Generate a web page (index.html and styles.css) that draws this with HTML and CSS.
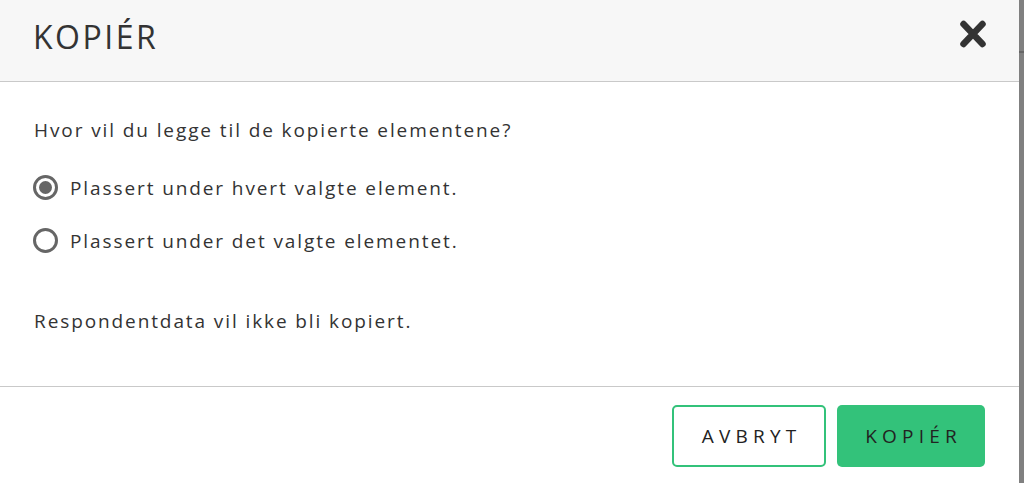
FILE: index.html
```html
<!DOCTYPE html>
<html lang="no">
<head>
<meta charset="utf-8">
<link rel="stylesheet" href="styles.css">
</head>
<body>
<div class="page">
  <div class="dialog">
    <div class="header">
      <h1 class="title">KOPIÉR</h1>
      <button class="close" aria-label="Lukk">
        <svg width="28" height="28" viewBox="0 0 28 28"><path d="M4.5 4 L23.5 24 M23.5 4 L4.5 24" stroke="#333" stroke-width="6.5" stroke-linecap="round"/></svg>
      </button>
    </div>
    <div class="body">
      <p class="question">Hvor vil du legge til de kopierte elementene?</p>
      <label class="option"><span class="radio checked"></span><span>Plassert under hvert valgte element.</span></label>
      <label class="option"><span class="radio"></span><span>Plassert under det valgte elementet.</span></label>
      <p class="note">Respondentdata vil ikke bli kopiert.</p>
    </div>
    <div class="footer">
      <button class="btn btn-secondary">AVBRYT</button>
      <button class="btn btn-primary">KOPIÉR</button>
    </div>
  </div>
  <div class="scrollbar"><div class="scroll-mark"></div></div>
</div>
</body>
</html>
```
FILE: styles.css
```css
* { box-sizing: border-box; }
html, body { margin: 0; padding: 0; background: #fff; }
body { font-family: "Open Sans", "Lato", sans-serif; color: #333; }
.page { display: flex; width: 1024px; height: 483px; overflow: hidden; }
.dialog { flex: 1; display: flex; flex-direction: column; background: #fff; }
.header {
  height: 82px;
  background: #f7f7f7;
  border-bottom: 1px solid #c9c9c9;
  display: flex;
  align-items: flex-start;
  justify-content: space-between;
  padding: 17px 32px 0 33px;
}
.title {
  margin: 0;
  font-family: "Open Sans", sans-serif;
  font-weight: 400;
  font-size: 32px;
  line-height: 40px;
  letter-spacing: 2.5px;
  color: #333;
}
.close { background: none; border: 0; padding: 0; margin-top: 3px; width: 28px; height: 28px; display: flex; cursor: pointer; }
.body { padding: 36px 34px 0; height: 305px; border-bottom: 1px solid #c9c9c9; }
.question { margin: 0 0 19px; font-size: 19px; line-height: 24px; letter-spacing: 1.9px; }
.option { display: flex; align-items: center; gap: 12px; height: 53px; font-size: 19px; letter-spacing: 1.9px; margin-left: -1px; }
.radio {
  flex: none;
  width: 25px; height: 25px; border-radius: 50%;
  border: 3px solid #666; display: inline-flex; align-items: center; justify-content: center;
}
.radio.checked::after { content: ""; width: 13px; height: 13px; border-radius: 50%; background: #666; }
.note { margin: 42px 0 0; font-size: 19px; line-height: 24px; letter-spacing: 1.9px; }
.footer { flex: 1; display: flex; justify-content: flex-end; align-items: flex-start; padding: 18px 34px 0 0; gap: 11px; }
.btn {
  height: 62px; border-radius: 5px; font-family: "Open Sans", sans-serif; font-size: 19px;
  letter-spacing: 5.2px; text-indent: 5.2px; color: #222; cursor: pointer; padding: 0;
}
.btn-secondary { width: 154px; background: #fff; border: 2px solid #33c27a; }
.btn-primary { width: 148px; background: #33c27a; border: 0; }
.scrollbar { width: 5px; background: #808080; }
.scroll-mark { margin-top: 51px; height: 2px; background: #666; }
```
